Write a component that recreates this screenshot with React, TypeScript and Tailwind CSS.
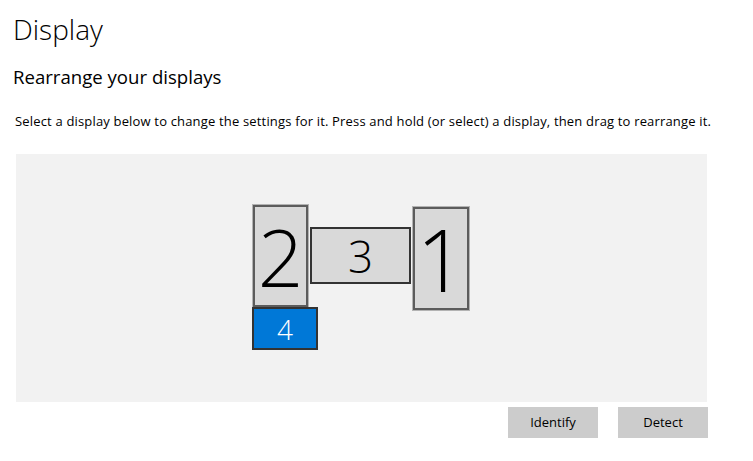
const font = { fontFamily: '"Open Sans", "Noto Sans", sans-serif' };

type Monitor = {
  id: string;
  box: string;
  num: string;
};

const monitors: Monitor[] = [
  {
    id: "2",
    box: "left-[237px] top-[51px] w-[55px] h-[102px] bg-[#d9d9d9] border-2 border-[#5c5c5c] shadow-[0_0_0_1px_#b3b3b3]",
    num: "text-[80px] text-black",
  },
  {
    id: "3",
    box: "left-[294px] top-[73px] w-[101px] h-[57px] bg-[#d9d9d9] border-2 border-[#333333]",
    num: "text-[44px] text-black",
  },
  {
    id: "1",
    box: "left-[397px] top-[53px] w-[56px] h-[103px] bg-[#d9d9d9] border-2 border-[#5c5c5c] shadow-[0_0_0_1px_#b3b3b3]",
    num: "text-[86px] text-black",
  },
  {
    id: "4",
    box: "left-[236px] top-[153px] w-[66px] h-[43px] bg-[#0078d7] border-2 border-[#333333]",
    num: "text-[28px] text-white",
  },
];

export default function App() {
  return (
    <div className="w-[753px] h-[461px] bg-white text-black overflow-hidden" style={font}>
      <div className="pl-[13px] pt-[9px]">
        <h1 className="text-[28px] font-light leading-[40px]">Display</h1>
        <h2 className="mt-[14px] text-[18.6px] leading-[28px]">Rearrange your displays</h2>
        <p className="mt-[21px] pl-[2px] text-[13px] leading-[18px] tracking-[0.17px]">
          Select a display below to change the settings for it. Press and hold (or select) a display, then drag to rearrange it.
        </p>
      </div>

      <div className="relative ml-[16px] mt-[24px] w-[691px] h-[248px] bg-[#f2f2f2]">
        {monitors.map((m) => (
          <div
            key={m.id}
            className={`absolute flex items-center justify-center box-border ${m.box}`}
          >
            <span className={`font-light leading-none ${m.num}`}>{m.id}</span>
          </div>
        ))}
      </div>

      <div className="flex justify-end gap-[20px] w-[708px] mt-[5px]">
        <button className="w-[90px] h-[31px] bg-[#cccccc] text-[13px] text-black">Identify</button>
        <button className="w-[90px] h-[31px] bg-[#cccccc] text-[13px] text-black">Detect</button>
      </div>
    </div>
  );
}
